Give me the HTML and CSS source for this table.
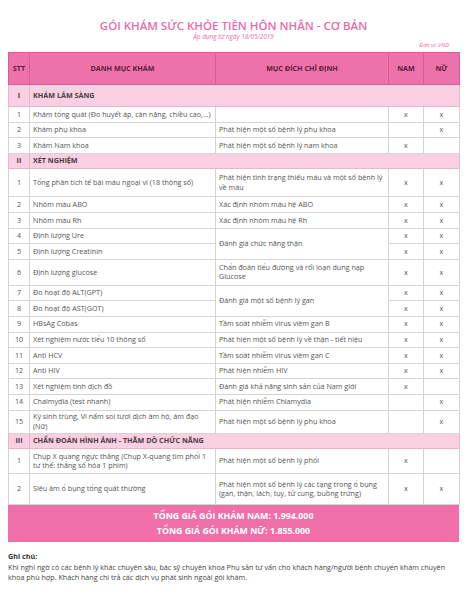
FILE: index.html
```html
<!DOCTYPE html>
<html lang="vi">
<head>
<meta charset="utf-8">
<link rel="stylesheet" href="styles.css">
</head>
<body>
<div class="page">
  <h1 class="title">GÓI KHÁM SỨC KHỎE TIỀN HÔN NHÂN - CƠ BẢN</h1>
  <div class="subtitle">Áp dụng từ ngày 18/05/2019</div>
  <div class="unit">Đơn vị: VND</div>
  <table class="grid">
    <colgroup>
      <col class="c-stt"><col class="c-name"><col class="c-purpose"><col class="c-nam"><col class="c-nu">
    </colgroup>
    <thead>
      <tr class="head"><th>STT</th><th>DANH MỤC KHÁM</th><th>MỤC ĐÍCH CHỈ ĐỊNH</th><th>NAM</th><th>NỮ</th></tr>
    </thead>
    <tbody>
      <tr class="section first"><td class="stt">I</td><td colspan="4">KHÁM LÂM SÀNG</td></tr>
      <tr><td class="stt">1</td><td>Khám tổng quát (Đo huyết áp, cân nặng, chiều cao,...)</td><td></td><td class="mk">x</td><td class="mk">x</td></tr>
      <tr><td class="stt">2</td><td>Khám phụ khoa</td><td>Phát hiện một số bệnh lý phụ khoa</td><td class="mk"></td><td class="mk">x</td></tr>
      <tr><td class="stt">3</td><td>Khám Nam khoa</td><td>Phát hiện một số bệnh lý nam khoa</td><td class="mk">x</td><td class="mk"></td></tr>
      <tr class="section"><td class="stt">II</td><td colspan="4">XÉT NGHIỆM</td></tr>
      <tr class="h28"><td class="stt">1</td><td>Tổng phân tích tế bài máu ngoại vi (18 thông số)</td><td>Phát hiện tình trạng thiếu máu và một số bệnh lý về máu</td><td class="mk">x</td><td class="mk">x</td></tr>
      <tr><td class="stt">2</td><td>Nhóm máu ABO</td><td>Xác định nhóm máu hệ ABO</td><td class="mk">x</td><td class="mk">x</td></tr>
      <tr><td class="stt">3</td><td>Nhóm máu Rh</td><td>Xác định nhóm máu hệ Rh</td><td class="mk">x</td><td class="mk">x</td></tr>
      <tr><td class="stt">4</td><td>Định lượng Ure</td><td rowspan="2">Đánh giá chức năng thận</td><td class="mk">x</td><td class="mk">x</td></tr>
      <tr><td class="stt">5</td><td>Định lượng Creatinin</td><td class="mk">x</td><td class="mk">x</td></tr>
      <tr class="h26"><td class="stt">6</td><td>Định lượng glucose</td><td>Chẩn đoán tiểu đường và rối loạn dung nạp Glucose</td><td class="mk">x</td><td class="mk">x</td></tr>
      <tr><td class="stt">7</td><td>Đo hoạt độ ALT(GPT)</td><td rowspan="2">Đánh giá một số bệnh lý gan</td><td class="mk">x</td><td class="mk">x</td></tr>
      <tr><td class="stt">8</td><td>Đo hoạt độ AST(GOT)</td><td class="mk">x</td><td class="mk">x</td></tr>
      <tr><td class="stt">9</td><td>HBsAg Cobas</td><td>Tầm soát nhiễm virus viêm gan B</td><td class="mk">x</td><td class="mk">x</td></tr>
      <tr><td class="stt">10</td><td>Xét nghiệm nước tiểu 10 thông số</td><td>Phát hiện một số bệnh lý về thận - tiết niệu</td><td class="mk">x</td><td class="mk">x</td></tr>
      <tr><td class="stt">11</td><td>Anti HCV</td><td>Tầm soát nhiễm virus viêm gan C</td><td class="mk">x</td><td class="mk">x</td></tr>
      <tr><td class="stt">12</td><td>Anti HIV</td><td>Phát hiện nhiễm HIV</td><td class="mk">x</td><td class="mk">x</td></tr>
      <tr><td class="stt">13</td><td>Xét nghiệm tinh dịch đồ</td><td>Đánh giá khả năng sinh sản của Nam giới</td><td class="mk">x</td><td class="mk"></td></tr>
      <tr><td class="stt">14</td><td>Chalmydia (test nhanh)</td><td>Phát hiện nhiễm Chlamydia</td><td class="mk"></td><td class="mk">x</td></tr>
      <tr class="h23"><td class="stt">15</td><td>Ký sinh trùng, Vi nấm soi tươi dịch âm hộ, âm đạo (Nữ)</td><td>Phát hiện một số bệnh lý phụ khoa</td><td class="mk"></td><td class="mk">x</td></tr>
      <tr class="section"><td class="stt">III</td><td colspan="4">CHẨN ĐOÁN HÌNH ẢNH - THĂM DÒ CHỨC NĂNG</td></tr>
      <tr class="h25"><td class="stt">1</td><td>Chụp X quang ngực thẳng (Chụp X-quang tim phổi 1 tư thế: thẳng số hóa 1 phim)</td><td>Phát hiện một số bệnh lý phổi</td><td class="mk">x</td><td class="mk"></td></tr>
      <tr class="h31"><td class="stt">2</td><td>Siêu âm ổ bụng tổng quát thường</td><td>Phát hiện một số bệnh lý các tạng trong ổ bụng (gan, thận, lách, tụy, tử cung, buồng trứng)</td><td class="mk">x</td><td class="mk">x</td></tr>
    </tbody>
  </table>
  <div class="total">
    <div>TỔNG GIÁ GÓI KHÁM NAM: 1.994.000</div>
    <div>TỔNG GIÁ GÓI KHÁM NỮ: 1.855.000</div>
  </div>
  <div class="note">
    <div class="note-title">Ghi chú:</div>
    <p class="note-text">Khi nghi ngờ có các bệnh lý khác chuyên sâu, bác sỹ chuyên khoa Phụ sản tư vấn cho khách hàng/người bệnh chuyển khám chuyên khoa phù hợp. Khách hàng chi trả các dịch vụ phát sinh ngoài gói khám.</p>
  </div>
</div>
</body>
</html>
```

FILE: styles.css
```css
html, body {
  margin: 0;
  padding: 0;
  background: #ffffff;
}
.page {
  width: 468px;
  padding: 0 9px 0 8px;
  box-sizing: border-box;
  font-family: "Open Sans", "Liberation Sans", sans-serif;
  color: #555555;
}
.title {
  margin: 0;
  padding-top: 19px;
  text-align: center;
  font-size: 11.5px;
  line-height: 14px;
  font-weight: 600;
  color: #ec6ba7;
}
.subtitle {
  text-align: center;
  font-size: 6.4px;
  line-height: 7px;
  font-style: italic;
  color: #ec6ba7;
  margin-top: 0;
}
.unit {
  text-align: right;
  font-size: 5.7px;
  line-height: 7px;
  font-style: italic;
  color: #ec6ba7;
  padding-right: 10px;
  margin-top: 2px;
  height: 10px;
}
.grid {
  width: 451px;
  border-collapse: collapse;
  table-layout: fixed;
  font-size: 7.2px;
  line-height: 9.5px;
}
.c-stt { width: 21px; }
.c-name { width: 186px; }
.c-purpose { width: 173px; }
.c-nam { width: 35px; }
.c-nu { width: 36px; }
.grid tr { height: 15.6px; }
.grid th, .grid td {
  border: 1px solid #d4d4d4;
  padding: 0 3px;
  text-align: left;
  vertical-align: middle;
  font-weight: 400;
}
.grid .head { height: 32px; }
.head th {
  background: #ee72aa;
  border-color: #d85c95;
  color: #5a1e3c;
  font-weight: 700;
  text-align: center;
}
.section td {
  background: #f9cfe2;
  color: #4a3a42;
  font-weight: 700;
  border-color: #e8b6cb;
}
.grid .section.first { height: 22px; }
.grid .section { height: 15.6px; }
.section td[colspan] { border-left-color: #d4d4d4; }
.stt { text-align: center !important; }
.mk { text-align: center !important; }
.grid .h31 { height: 31px; }
.grid .h28 { height: 28px; }
.grid .h26 { height: 26px; }
.grid .h25 { height: 25px; }
.grid .h23 { height: 23px; }
.total {
  width: 451px;
  height: 37px;
  background: #f06fa9;
  color: #ffffff;
  text-align: center;
  font-weight: 700;
  font-size: 8.8px;
  line-height: 15px;
  padding: 4px 0 3px;
  box-sizing: border-box;
}
.note {
  margin-top: 9px;
  font-size: 7.2px;
  line-height: 10.5px;
  color: #444444;
}
.note-title {
  font-weight: 700;
  color: #333333;
}
.note-text {
  margin: 0;
}
```
